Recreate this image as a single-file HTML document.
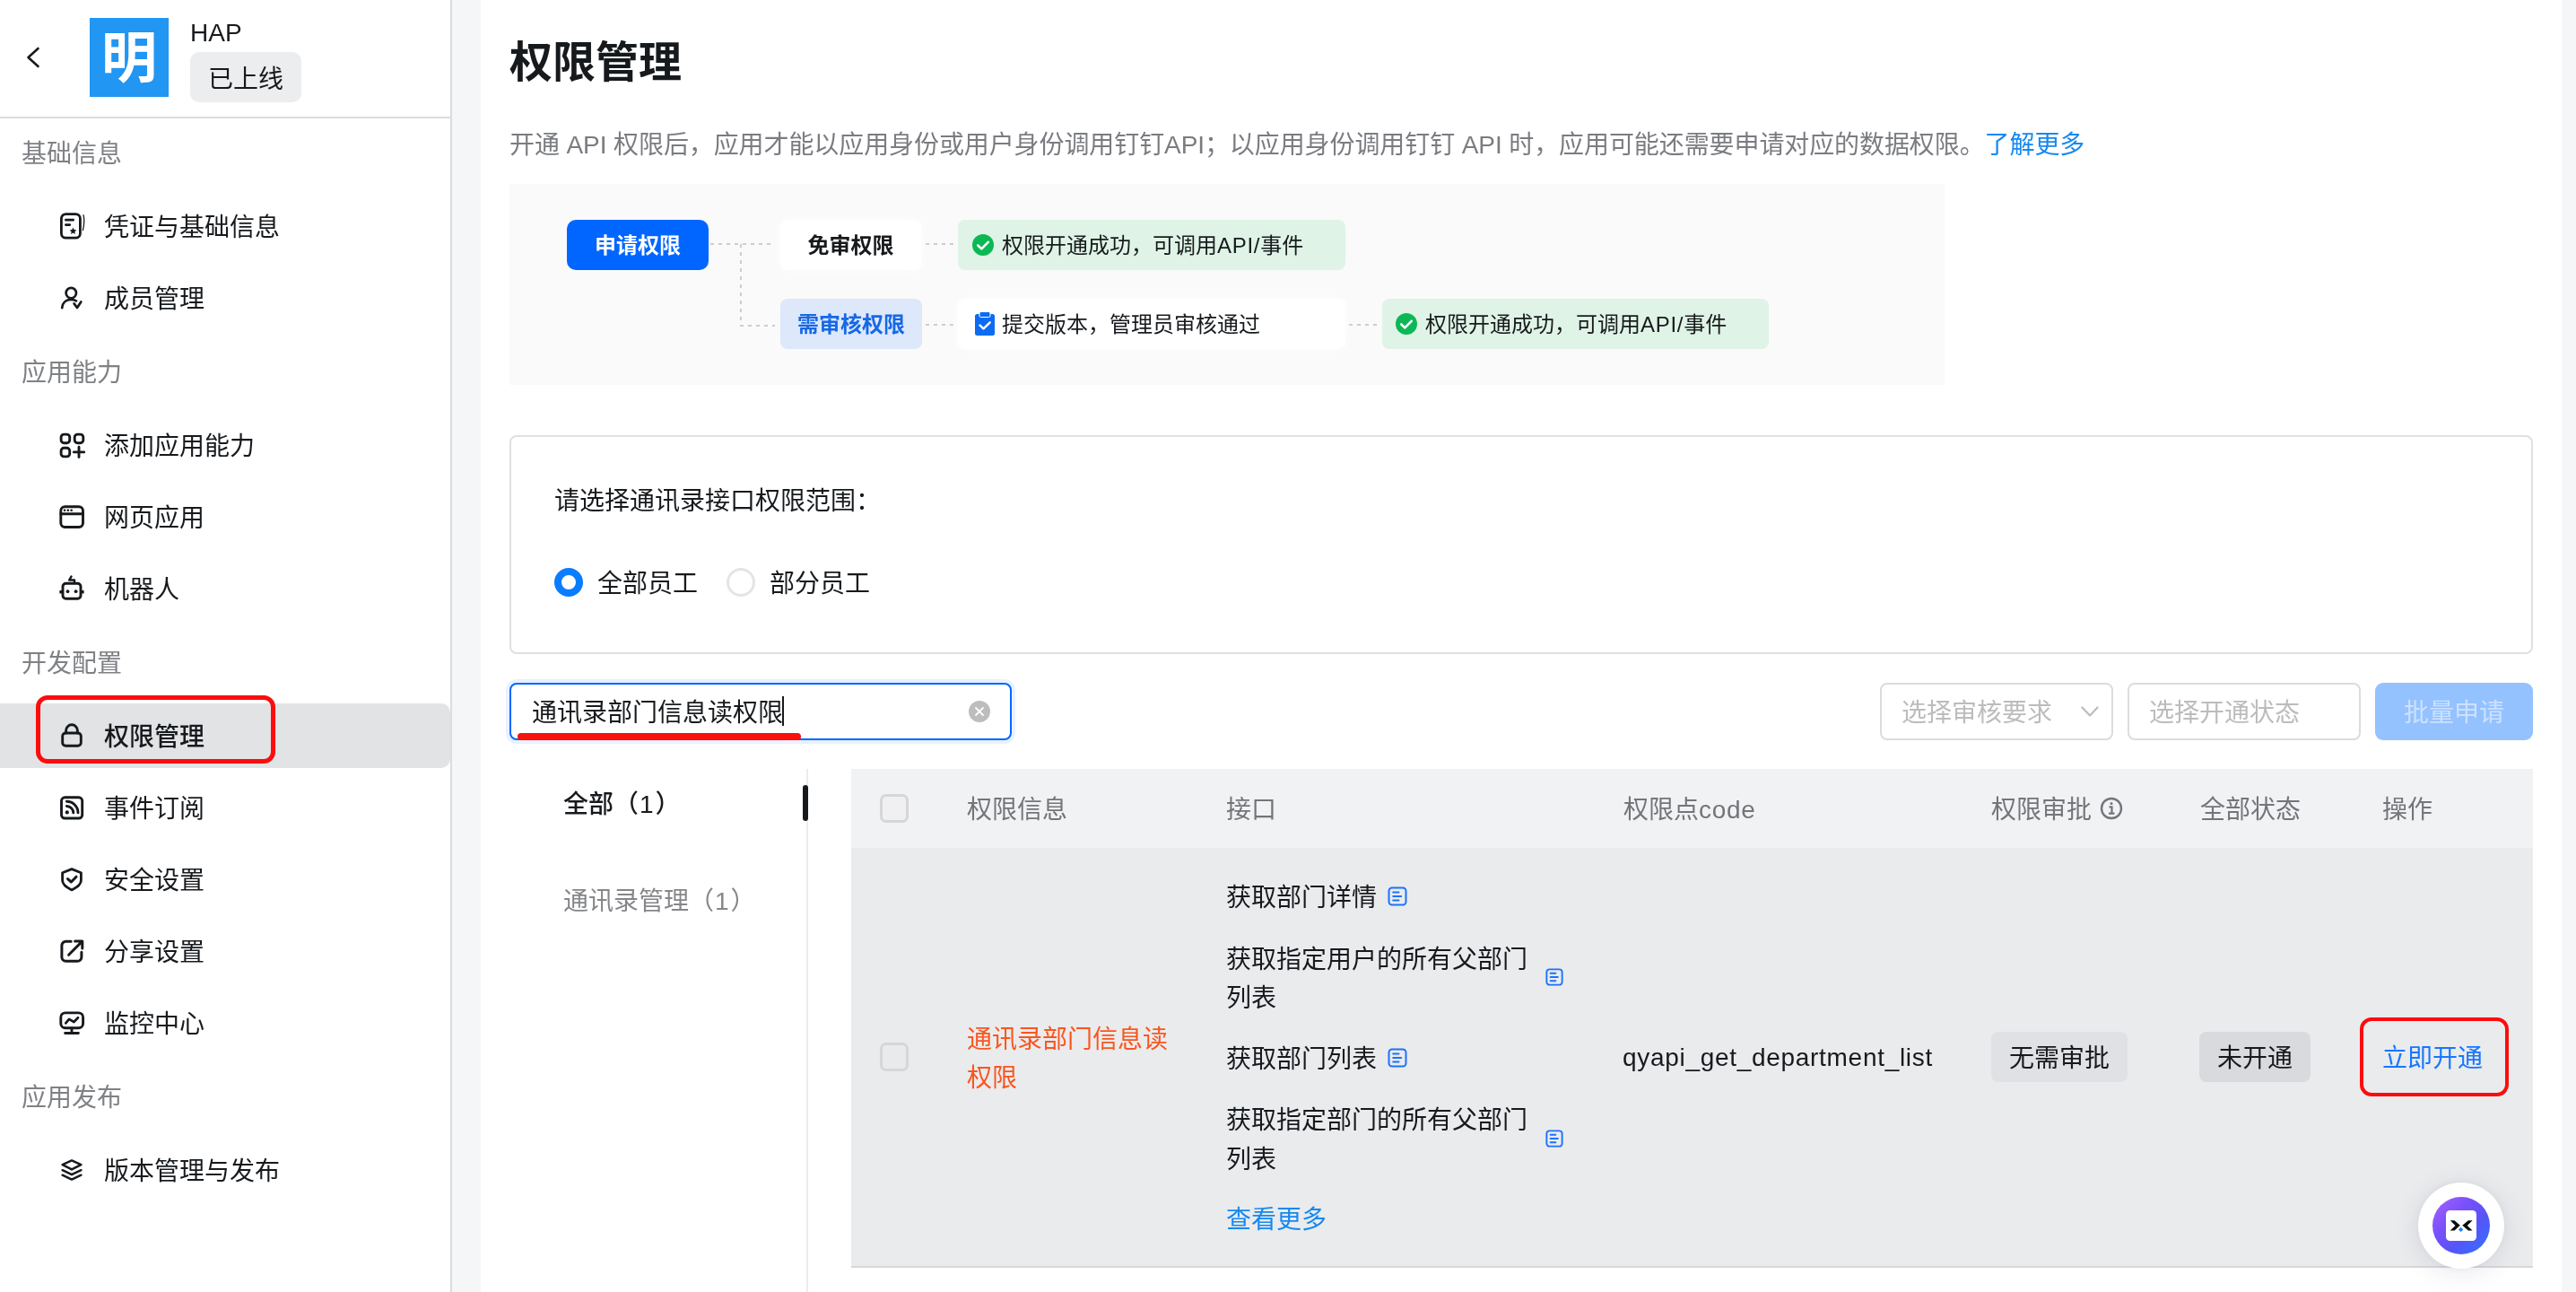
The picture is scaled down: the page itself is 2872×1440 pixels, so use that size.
<!DOCTYPE html>
<html lang="zh-CN">
<head>
<meta charset="utf-8">
<title>权限管理</title>
<style>
*{box-sizing:border-box;margin:0;padding:0}
html,body{width:2872px;height:1440px;overflow:hidden;background:#fff}
body{position:relative;font-family:"Liberation Sans","Noto Sans CJK SC",sans-serif;font-size:28px;color:#171a1d;-webkit-font-smoothing:antialiased;will-change:transform}
.abs{position:absolute}
.t{position:absolute;white-space:nowrap;line-height:40px;height:40px;margin-top:2px}
/* ---------- sidebar ---------- */
#side{position:absolute;left:0;top:0;width:504px;height:1440px;background:#fff;border-right:2px solid #dcdcdc}
#shead{position:absolute;left:0;top:0;width:502px;height:132px;border-bottom:2px solid #dcdcdc}
#logo{position:absolute;left:100px;top:20px;width:88px;height:88px;background:#2196f3;color:#fff;font-weight:700;font-size:62px;line-height:92px;text-align:center}
#badge{position:absolute;left:212px;top:58px;width:124px;height:56px;border-radius:10px;background:#ecedef;text-align:center;line-height:62px;font-size:28px;color:#171a1d}
.glabel{position:absolute;margin-top:2px;left:24px;color:#7f8185;font-size:28px;line-height:40px;height:40px;white-space:nowrap}
.item{position:absolute;left:0;width:502px;height:80px}
.item svg{position:absolute;left:64px;top:24px;width:32px;height:32px;overflow:visible}
.item span{position:absolute;left:116px;top:22px;line-height:40px;font-size:28px;white-space:nowrap;color:#171a1d}
#selbg{position:absolute;left:0;top:784px;width:502px;height:72px;background:#e2e3e5;border-radius:0 10px 10px 0}
.redbox{position:absolute;border:5px solid #fb0d0d;border-radius:13px}
/* ---------- main ---------- */
#gutl{position:absolute;left:504px;top:0;width:32px;height:1440px;background:#f5f6f8}
#gutr{position:absolute;left:2856px;top:0;width:16px;height:1440px;background:#f5f6f8}
#title{position:absolute;left:568px;top:36px;font-size:48px;font-weight:700;line-height:68px;white-space:nowrap;color:#171a1d}
#desc{position:absolute;left:568px;top:142px;letter-spacing:-0.09px;font-size:28px;line-height:40px;white-space:nowrap;color:#7a7c80}
#desc b{font-weight:400;color:#1688f0}
#flow{position:absolute;left:568px;top:205px;width:1600px;height:224px;background:#fafafa}
.fbox{position:absolute;height:56px;line-height:58px;font-size:24px;border-radius:8px;white-space:nowrap}
.dash{position:absolute;height:2px;background:repeating-linear-gradient(90deg,#cdcdcd 0 4px,transparent 4px 9px)}
.vdash{position:absolute;width:2px;background:repeating-linear-gradient(180deg,#cdcdcd 0 4px,transparent 4px 9px)}
#panel{position:absolute;left:568px;top:485px;width:2256px;height:244px;border:2px solid #dfe0e3;border-radius:8px;background:#fff}
.radio{position:absolute;width:32px;height:32px;border-radius:50%}
#search{position:absolute;left:568px;top:761px;width:560px;height:64px;border:2px solid #0068ff;border-radius:8px;background:#fff;box-shadow:0 0 0 4px rgba(0,104,255,.09)}
.sel{position:absolute;top:761px;height:64px;border:2px solid #dcdcdc;border-radius:8px;background:#fff;color:#bcbcbc;font-size:28px;line-height:64px;padding-left:22px;white-space:nowrap}
#batch{position:absolute;left:2648px;top:761px;width:176px;height:64px;border-radius:9px;background:#94c2ff;color:#cde1ff;font-size:28px;line-height:68px;text-align:center}
#thead{position:absolute;left:949px;top:857px;width:1875px;height:88px;background:#f1f2f4}
#trow{position:absolute;left:949px;top:945px;width:1875px;height:468px;background:#eaebed;border-bottom:2px solid #d7d8da}
.th{position:absolute;top:883px;line-height:40px;font-size:28px;color:#737579;white-space:nowrap}
.cb{position:absolute;left:981px;width:32px;height:32px;border:3px solid #d5d6d8;border-radius:7px;background:#f0f0f2}
.tag{position:absolute;top:1150px;height:56px;line-height:60px;border-radius:8px;font-size:28px;text-align:center;white-space:nowrap;color:#171a1d}
.doc{position:absolute;width:22px;height:22px;overflow:visible}
</style>
</head>
<body>
<!-- SIDEBAR -->
<div id="side">
  <div id="shead">
    <svg class="abs" style="left:26px;top:48px" width="24" height="32" viewBox="0 0 24 32" fill="none" stroke="#171a1d" stroke-width="2.6" stroke-linecap="round" stroke-linejoin="round"><path d="M16.5 6 L5.5 16 L16.5 26"/></svg>
    <div id="logo">明</div>
    <div class="t" style="left:212px;top:15px;font-size:28px">HAP</div>
    <div id="badge">已上线</div>
  </div>
  <div id="selbg"></div>
  <div class="glabel" style="top:150px">基础信息</div>
  <div class="item" style="top:212px"><svg viewBox="0 0 32 32" fill="none" stroke="#171a1d" stroke-width="2.8" stroke-linecap="round" stroke-linejoin="round"><rect x="4.4" y="2.6" width="21" height="26.6" rx="5"/><path d="M9.4 9.2H17.6M9.4 14.6H13.8"/><path d="M17.5 17.6l1.15 2.5 2.75.3-2.05 1.85.6 2.7-2.45-1.4-2.45 1.4.6-2.7-2.05-1.85 2.75-.3z" fill="#171a1d" stroke="none"/><path d="M29 3.6c1.2 4.5 .8 11-.6 17" stroke-width="1.3"/></svg><span>凭证与基础信息</span></div>
  <div class="item" style="top:292px"><svg viewBox="0 0 32 32" fill="none" stroke="#171a1d" stroke-width="2.7" stroke-linecap="round" stroke-linejoin="round"><circle cx="15.3" cy="10.6" r="5.7"/><path d="M5.2 27.2c.4-5.6 4.2-9.2 9.8-9.3 2.3 0 4.300 .5 6 1.500"/><path d="M18.600 22.400l3.400 4.600 4.300-6.600"/></svg><span>成员管理</span></div>
  <div class="glabel" style="top:394px">应用能力</div>
  <div class="item" style="top:456px"><svg viewBox="0 0 32 32" fill="none" stroke="#171a1d" stroke-width="2.9" stroke-linecap="round" stroke-linejoin="round"><rect x="4.100" y="4.100" width="9.600" height="9.600" rx="3.200"/><rect x="19.200" y="4.100" width="9.600" height="9.600" rx="3.200"/><rect x="4.100" y="19.300" width="9.600" height="9.600" rx="3.200"/><path d="M24 18.200v11.400M18.300 23.900h11.400"/></svg><span>添加应用能力</span></div>
  <div class="item" style="top:536px"><svg viewBox="0 0 32 32" fill="none" stroke="#171a1d" stroke-width="2.9" stroke-linecap="round" stroke-linejoin="round"><rect x="3.800" y="4.700" width="24.700" height="22.800" rx="4.500"/><path d="M3.800 12.800h24.700"/><path d="M8 8.800h.1M11.800 8.800h.1M15.600 8.800h.1" stroke-width="2.600"/></svg><span>网页应用</span></div>
  <div class="item" style="top:616px"><svg viewBox="0 0 32 32" fill="none" stroke="#171a1d" stroke-width="2.9" stroke-linecap="round" stroke-linejoin="round"><rect x="6" y="10.300" width="20" height="17" rx="3.500"/><path d="M4.200 18v3.400M27.800 18v3.400" stroke-width="3.600" stroke-linecap="butt"/><path d="M15.500 2.500l-2.300 4h5.800v3.500" stroke-width="2.500"/><circle cx="11.500" cy="19.200" r="1.900" fill="#171a1d" stroke="none"/><circle cx="20.600" cy="19.200" r="1.900" fill="#171a1d" stroke="none"/></svg><span>机器人</span></div>
  <div class="glabel" style="top:718px">开发配置</div>
  <div class="item" style="top:780px"><svg viewBox="0 0 32 32" fill="none" stroke="#171a1d" stroke-width="2.9" stroke-linecap="round" stroke-linejoin="round"><rect x="5.700" y="13" width="20.600" height="14.200" rx="3.500"/><path d="M9.600 13v-2.800a6.400 6.400 0 0 1 12.800 0V13"/></svg><span style="font-weight:500">权限管理</span></div>
  <div class="item" style="top:860px"><svg viewBox="0 0 32 32" fill="none" stroke="#171a1d" stroke-width="2.9" stroke-linecap="round" stroke-linejoin="round"><rect x="4.500" y="4.800" width="23.200" height="23.200" rx="3.800"/><circle cx="10.800" cy="21.400" r="2.100" fill="#171a1d" stroke="none"/><path d="M10.400 14.500a7.400 7.400 0 0 1 7.400 7.400M10.400 9.300a12.600 12.600 0 0 1 12.600 12.600"/></svg><span>事件订阅</span></div>
  <div class="item" style="top:940px"><svg viewBox="0 0 32 32" fill="none" stroke="#171a1d" stroke-width="2.800" stroke-linecap="round" stroke-linejoin="round"><path d="M16 4.600l10.400 4.100v8.600c0 4.300-4.400 7.800-10.400 10.600C10 25.100 5.600 21.600 5.600 17.300V8.700z"/><path d="M11.500 15.600l3.900 3.400 5.600-5.800" stroke-width="3"/></svg><span>安全设置</span></div>
  <div class="item" style="top:1020px"><svg viewBox="0 0 32 32" fill="none" stroke="#171a1d" stroke-width="3" stroke-linecap="round" stroke-linejoin="round"><path d="M15.200 5.300H9.400a4.500 4.500 0 0 0-4.500 4.500v13a4.500 4.500 0 0 0 4.500 4.500h13a4.500 4.500 0 0 0 4.500-4.500v-5.600"/><path d="M12.600 20.300L27.200 5.600M19.600 4.900h8.200v8.200"/></svg><span>分享设置</span></div>
  <div class="item" style="top:1100px"><svg viewBox="0 0 32 32" fill="none" stroke="#171a1d" stroke-width="2.900" stroke-linecap="round" stroke-linejoin="round"><rect x="3.800" y="4.900" width="24.800" height="16.800" rx="5"/><path d="M16 21.700v5.500M8.600 27.500h14.800"/><path d="M9.300 16.400l3.700-4.500 5.400 3.100 4.600-4.800" stroke-width="2.700"/></svg><span>监控中心</span></div>
  <div class="glabel" style="top:1202px">应用发布</div>
  <div class="item" style="top:1264px"><svg viewBox="0 0 32 32" fill="none" stroke="#171a1d" stroke-width="2.500" stroke-linecap="round" stroke-linejoin="round"><path d="M16 5.400l10.400 4.800L16 15.400 5.600 10.200z"/><path d="M5.600 16.200L16 21.200l10.400-5M5.600 21.700L16 26.600l10.400-4.900"/></svg><span>版本管理与发布</span></div>
</div>
<div class="redbox" style="left:40px;top:775px;width:267px;height:76px"></div>
<div id="gutl"></div>
<div id="gutr"></div>
<!-- MAIN -->
<div id="title">权限管理</div>
<div id="desc">开通 API 权限后，应用才能以应用身份或用户身份调用钉钉API；以应用身份调用钉钉 API 时，应用可能还需要申请对应的数据权限。<b>了解更多</b></div>
<!-- FLOW -->
<div id="flow">
  <div class="dash" style="left:224px;top:66px;width:72px"></div>
  <div class="vdash" style="left:257px;top:67px;height:91px"></div>
  <div class="dash" style="left:257px;top:157px;width:39px"></div>
  <div class="dash" style="left:464px;top:66px;width:32px"></div>
  <div class="dash" style="left:464px;top:156px;width:32px"></div>
  <div class="dash" style="left:936px;top:156px;width:32px"></div>
  <div class="fbox" style="left:64px;top:40px;width:158px;background:#0066ff;color:#fff;font-weight:700;text-align:center;border-radius:10px">申请权限</div>
  <div class="fbox" style="left:302px;top:40px;width:157px;background:#fff;color:#171a1d;font-weight:700;text-align:center;box-shadow:0 0 10px rgba(255,255,255,.9)">免审权限</div>
  <div class="fbox" style="left:302px;top:128px;width:158px;background:#dde8fb;color:#1668e6;font-weight:700;text-align:center">需审核权限</div>
  <div class="fbox" style="left:500px;top:40px;width:432px;background:#dff3e6;color:#171a1d;padding-left:49px"><svg class="abs" style="left:16px;top:16px" width="24" height="24" viewBox="0 0 24 24"><circle cx="12" cy="12" r="12" fill="#0cb855"/><path d="M6.300 12.500l4 3.900 7.400-7.600" fill="none" stroke="#fff" stroke-width="2.600" stroke-linecap="round" stroke-linejoin="round"/></svg>权限开通成功，可调用<span style="letter-spacing:.7px">API/</span>事件</div>
  <div class="fbox" style="left:500px;top:128px;width:432px;background:#fff;color:#171a1d;padding-left:49px;box-shadow:0 0 10px rgba(255,255,255,.9)"><svg class="abs" style="left:19px;top:14px" width="22" height="28" viewBox="0 0 22 28"><rect x="0" y="3" width="22" height="24" rx="2.500" fill="#0d6bf2"/><rect x="5" y="0.500" width="12" height="6" rx="1.500" fill="#0d6bf2" stroke="#fff" stroke-width="1"/><path d="M5.500 15.500l4 3.800 7.200-7" fill="none" stroke="#fff" stroke-width="2.400" stroke-linecap="round" stroke-linejoin="round"/></svg>提交版本，管理员审核通过</div>
  <div class="fbox" style="left:973px;top:128px;width:431px;background:#dff3e6;color:#171a1d;padding-left:48px"><svg class="abs" style="left:15px;top:16px" width="24" height="24" viewBox="0 0 24 24"><circle cx="12" cy="12" r="12" fill="#0cb855"/><path d="M6.300 12.500l4 3.900 7.400-7.600" fill="none" stroke="#fff" stroke-width="2.600" stroke-linecap="round" stroke-linejoin="round"/></svg>权限开通成功，可调用<span style="letter-spacing:.7px">API/</span>事件</div>
</div>
<!-- PANEL -->
<div id="panel"></div>
<div class="t" style="left:618px;top:537px">请选择通讯录接口权限范围：</div>
<div class="radio" style="left:618px;top:633px;border:8px solid #0a7cff;background:#fff"></div>
<div class="t" style="left:666px;top:629px">全部员工</div>
<div class="radio" style="left:810px;top:633px;border:3px solid #e3e4e6;background:#fff"></div>
<div class="t" style="left:858px;top:629px">部分员工</div>
<!-- TOOLBAR -->
<div id="search">
  <div class="t" style="left:23px;top:10px">通讯录部门信息读权限</div>
  <div class="abs" style="left:302px;top:13px;width:2px;height:33px;background:#171a1d"></div>
  <svg class="abs" style="left:510px;top:18px" width="24" height="24" viewBox="0 0 24 24"><circle cx="12" cy="12" r="12" fill="#bdbdbd"/><path d="M8 8l8 8M16 8l-8 8" stroke="#fff" stroke-width="1.800" stroke-linecap="round"/></svg>
</div>
<div class="abs" style="left:577px;top:817px;width:316px;height:8px;border-radius:4px;background:#f9110c"></div>
<div class="sel" style="left:2096px;width:260px">选择审核要求<svg class="abs" style="left:220px;top:20px" width="24" height="20" viewBox="0 0 24 20" fill="none" stroke="#bcbcbc" stroke-width="2.200" stroke-linecap="round" stroke-linejoin="round"><path d="M3.400 5.500l8.600 9L20.600 5.500"/></svg></div>
<div class="sel" style="left:2372px;width:260px">选择开通状态</div>
<div id="batch">批量申请</div>
<!-- CATEGORY -->
<div class="abs" style="left:899px;top:857px;width:2px;height:583px;background:#ececee"></div>
<div class="abs" style="left:895px;top:875px;width:6px;height:40px;border-radius:3px;background:#171a1d"></div>
<div class="t" style="left:628px;top:875px;font-weight:500">全部（<span style="font-family:'Liberation Sans',sans-serif;padding:0 2px 0 1px">1</span>）</div>
<div class="t" style="left:628px;top:983px;color:#858689">通讯录管理（<span style="font-family:'Liberation Sans',sans-serif;padding:0 2px 0 1px">1</span>）</div>
<!-- TABLE -->
<div id="thead"></div>
<div id="trow"></div>
<div class="cb" style="top:885px"></div>
<div class="th" style="left:1078px">权限信息</div>
<div class="th" style="left:1367px">接口</div>
<div class="th" style="left:1810px">权限点<span style="letter-spacing:.7px">code</span></div>
<div class="th" style="left:2220px">权限审批</div>
<svg class="abs" style="left:2341px;top:888px" width="26" height="26" viewBox="0 0 26 26" fill="none" stroke="#737579" stroke-width="2.400"><circle cx="13" cy="13" r="11"/><path d="M10.500 11.300h3v7M10 18.600h6.500" stroke-width="2.200"/><circle cx="13" cy="7.600" r="1.500" fill="#737579" stroke="none"/></svg>
<div class="th" style="left:2453px">全部状态</div>
<div class="th" style="left:2656px">操作</div>
<div class="cb" style="top:1162px;background:#e9eaec"></div>
<div class="t" style="left:1078px;top:1137px;color:#f9561e">通讯录部门信息读</div>
<div class="t" style="left:1078px;top:1180px;color:#f9561e">权限</div>
<div class="t" style="left:1367px;top:979px">获取部门详情</div>
<div class="t" style="left:1367px;top:1048px">获取指定用户的所有父部门</div>
<div class="t" style="left:1367px;top:1091px">列表</div>
<div class="t" style="left:1367px;top:1159px">获取部门列表</div>
<div class="t" style="left:1367px;top:1227px">获取指定部门的所有父部门</div>
<div class="t" style="left:1367px;top:1271px">列表</div>
<div class="t" style="left:1367px;top:1338px;color:#1688f0">查看更多</div>
<svg class="doc" style="left:1547px;top:988px" viewBox="0 0 22 22" fill="none" stroke="#1a73fb" stroke-width="2" stroke-linecap="round"><rect x="1.500" y="1.500" width="19" height="19" rx="3.500"/><path d="M6.200 6.400h6.300M6.200 11h9M6.200 15.600h6.300"/></svg>
<svg class="doc" style="left:1723px;top:1079px;width:20px;height:20px" viewBox="0 0 22 22" fill="none" stroke="#1a73fb" stroke-width="2.100" stroke-linecap="round"><rect x="1.500" y="1.500" width="19" height="19" rx="3.500"/><path d="M6.200 6.400h6.300M6.200 11h9M6.200 15.600h6.300"/></svg>
<svg class="doc" style="left:1547px;top:1168px" viewBox="0 0 22 22" fill="none" stroke="#1a73fb" stroke-width="2" stroke-linecap="round"><rect x="1.500" y="1.500" width="19" height="19" rx="3.500"/><path d="M6.200 6.400h6.300M6.200 11h9M6.200 15.600h6.300"/></svg>
<svg class="doc" style="left:1723px;top:1259px;width:20px;height:20px" viewBox="0 0 22 22" fill="none" stroke="#1a73fb" stroke-width="2.100" stroke-linecap="round"><rect x="1.500" y="1.500" width="19" height="19" rx="3.500"/><path d="M6.200 6.400h6.300M6.200 11h9M6.200 15.600h6.300"/></svg>
<div class="t" style="left:1809px;top:1157px;letter-spacing:.7px">qyapi_get_department_list</div>
<div class="tag" style="left:2220px;width:152px;background:#e0e1e4">无需审批</div>
<div class="tag" style="left:2452px;width:124px;background:#d9dadd">未开通</div>
<div class="t" style="left:2656px;top:1158px;color:#1677ff">立即开通</div>
<div class="redbox" style="left:2631px;top:1134px;width:166px;height:88px;border-width:4px"></div>
<!-- FAB -->
<div class="abs" style="left:2696px;top:1318px;width:96px;height:96px;border-radius:50%;background:#fff;box-shadow:0 4px 30px rgba(20,30,60,.10),0 0 8px rgba(20,30,60,.04)"></div>
<div class="abs" style="left:2712px;top:1334px;width:64px;height:64px;border-radius:50%;background:linear-gradient(135deg,#a965ff 0%,#7a50fb 35%,#5654f8 62%,#2f74ff 100%)"></div>
<svg class="abs" style="left:2727px;top:1349px" width="34" height="34" viewBox="0 0 34 34"><rect x="0" y="0" width="34" height="34" rx="4.500" fill="#fff"/><path d="M4.700 11.200h4.800l6.300 5.500-6.300 5.900H4.700l5.800-5.700zM29.600 11.200h-4.700l-6.600 5.500 6.600 5.900h4.700l-5.800-5.700z" fill="#0c0c0c"/><path d="M16.600 18.700l2.700 2.700-2.700 2.700-2.700-2.700z" fill="#1a84ff"/></svg>
</body>
</html>
